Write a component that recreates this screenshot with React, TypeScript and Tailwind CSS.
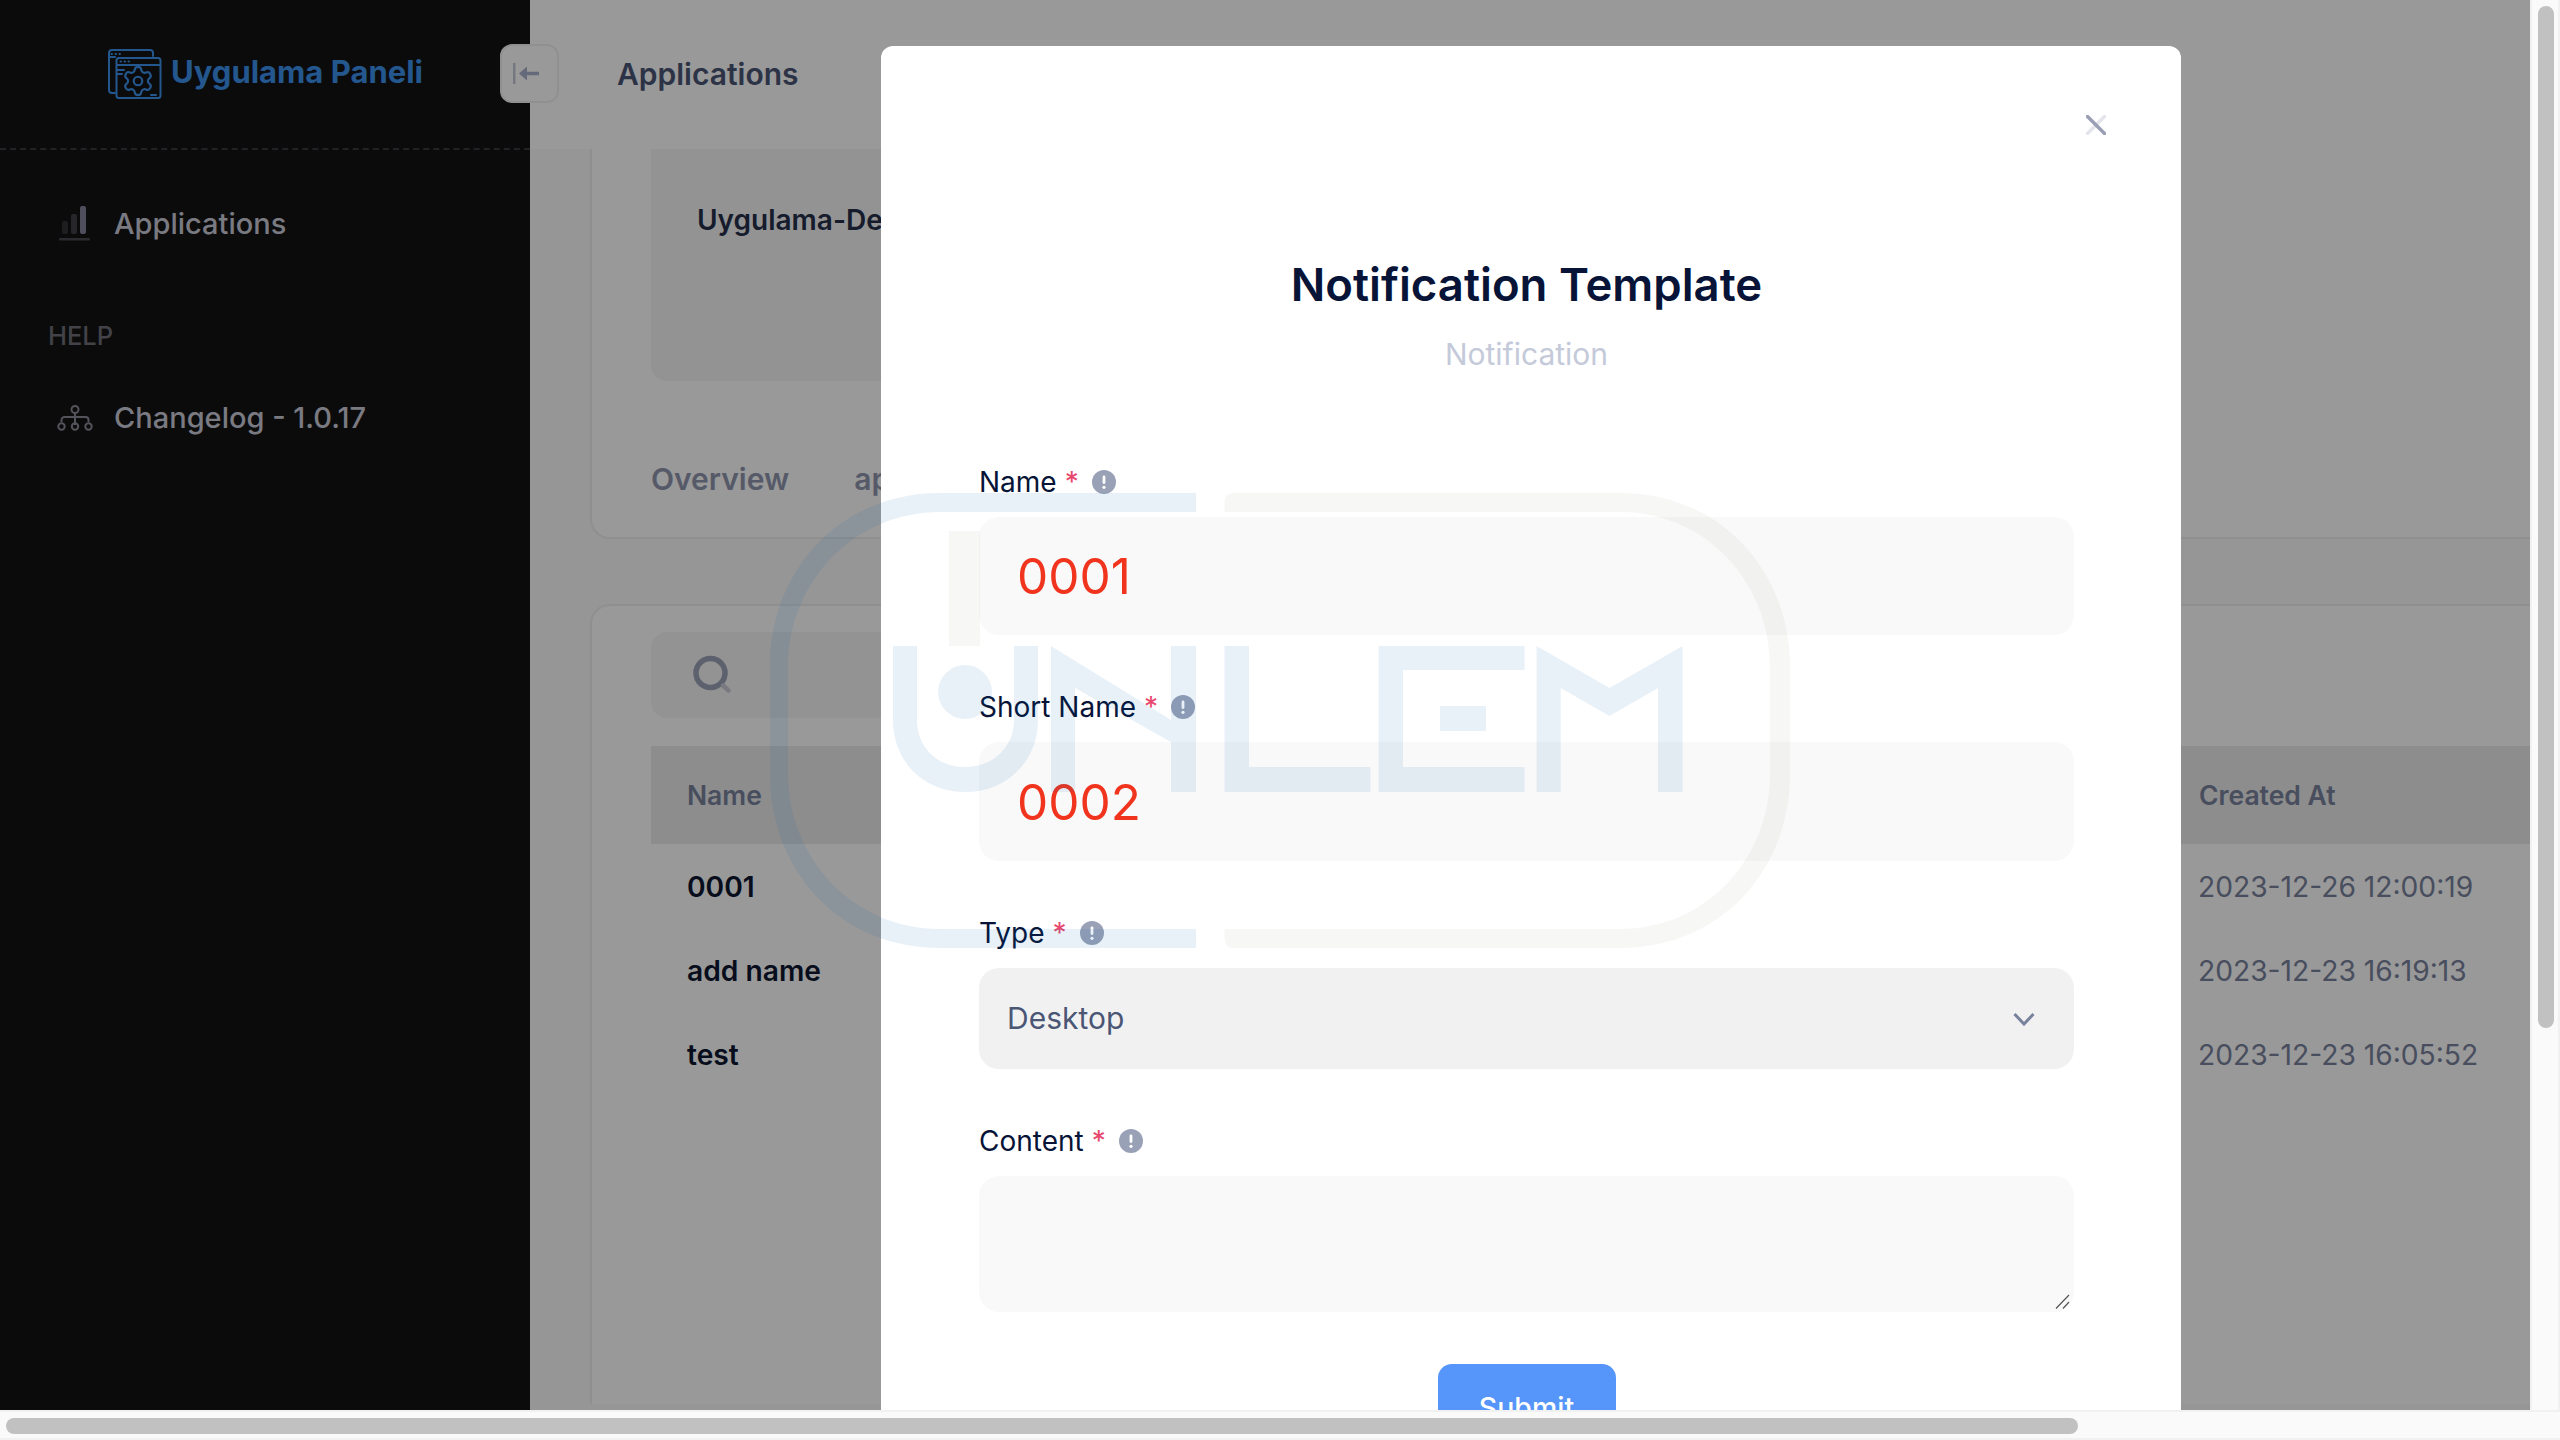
import React from "react";
import { Settings } from "lucide-react";

function Info() {
  return (
    <svg width="24" height="24" viewBox="0 0 24 24" className="shrink-0">
      <circle cx="12" cy="12" r="12" fill="#99a1b7" />
      <rect x="10.6" y="5.5" width="2.8" height="8.5" rx="1.4" fill="#fff" />
      <circle cx="12" cy="17.3" r="1.6" fill="#fff" />
    </svg>
  );
}

function Label({ text }: { text: string }) {
  return (
    <div className="flex items-center h-[36px] text-[28px] leading-[36px] text-[#071437]">
      <span>{text}</span>
      <span className="text-[#e8476e] ml-[8px]">*</span>
      <span className="ml-[13px]"><Info /></span>
    </div>
  );
}

function RedInput({ value, h }: { value: string; h: string }) {
  return (
    <input
      readOnly
      value={value}
      className={`w-full mt-[17px] ${h} rounded-[20px] bg-[#f9f9f9] pl-[38px] text-[49.5px] text-[#f1341e] outline-none`}
    />
  );
}

function Logo() {
  return (
    <svg width="54" height="50" viewBox="0 0 54 50" fill="none" stroke="#3c91eb" strokeWidth="2" strokeLinecap="round">
      <path d="M45 7V4a3 3 0 0 0-3-3H4a3 3 0 0 0-3 3v37a3 3 0 0 0 3 3h3" />
      <path d="M1 8h6" />
      <rect x="8.5" y="9" width="44" height="40" rx="2.5" />
      <path d="M9 16h43" />
      <path d="M3.5 5h.5M7.5 5h.5M11.5 5h.5M12.5 12.5h.5M16.5 12.5h.5M20.5 12.5h.5" />
      <path d="M9 21h7M9 25h5M43 46h5" />
      <svg x="13" y="15" width="34" height="34" viewBox="0 0 24 24" overflow="visible">
        <Settings size={24} strokeWidth={1.5} color="#3c91eb" />
      </svg>
    </svg>
  );
}

function ChartIcon() {
  return (
    <svg width="32" height="36" viewBox="0 0 32 36" className="shrink-0">
      <rect x="3" y="15" width="6" height="13" rx="2" fill="#323236" />
      <rect x="12" y="8" width="6" height="20" rx="2" fill="#3f3f46" />
      <rect x="21" y="0" width="6" height="28" rx="2" fill="#82829a" />
      <rect x="0" y="32" width="31" height="2.5" rx="1" fill="#48484f" />
    </svg>
  );
}

function TreeIcon() {
  return (
    <svg width="36" height="26" viewBox="0 0 36 26" fill="none" stroke="#8a8a98" strokeWidth="2" className="shrink-0">
      <circle cx="18" cy="4.5" r="3.5" />
      <path d="M18 8v12" />
      <path d="M4.5 17v-2a3 3 0 0 1 3-3h21a3 3 0 0 1 3 3v2" />
      <circle cx="4.5" cy="21.5" r="3.2" />
      <circle cx="18" cy="21.5" r="3.2" />
      <circle cx="31.5" cy="21.5" r="3.2" />
    </svg>
  );
}

function Watermark() {
  const blue = "rgba(0,100,178,0.09)";
  const gray = "rgba(60,60,40,0.045)";
  return (
    <svg
      width="1100"
      height="520"
      viewBox="740 460 1100 520"
      className="absolute left-[740px] top-[460px] pointer-events-none"
    >
      <path
        d="M1196 493H940C840 493 770 570 770 667V774C770 871 840 948 940 948H1196V929H940C855 929 788 860 788 774V667C788 581 855 512 940 512H1196Z"
        fill={blue}
      />
      <path
        d="M1224.5 512V503Q1224.5 493 1234 493H1620C1720 493 1790 570 1790 667V774C1790 871 1720 948 1620 948H1234Q1224.5 948 1224.5 938V929H1620C1705 929 1770 860 1770 774V667C1770 581 1705 512 1620 512Z"
        fill={gray}
      />
      <rect x="949" y="531" width="31" height="115" fill={gray} />
      <path
        d="M893 646H917V720C917 748 938 767 965 767C992 767 1014 748 1014 720V646H1038V720C1038 762 1006 792 965 792C924 792 893 762 893 720Z"
        fill={blue}
      />
      <ellipse cx="965" cy="692" rx="27" ry="27" fill={blue} />
      <path d="M1051 646L1171 720V646H1196V792H1171V742L1075 688V792H1051Z" fill={blue} />
      <path d="M1224.5 646H1249V767H1370.5V792H1224.5Z" fill={blue} />
      <path d="M1378.6 646H1524.5V670H1403V767H1524.5V792H1378.6Z" fill={blue} />
      <rect x="1440" y="706" width="46" height="25" fill={blue} />
      <path d="M1536.6 646L1609.5 688L1682.6 646V792H1658V688L1609.5 716L1560.7 688V792H1536.6Z" fill={blue} />
    </svg>
  );
}

function Row({ name, date, h }: { name: string; date: string; h: string }) {
  return (
    <div className={`flex items-center justify-between ${h} pl-[36px] text-[28.2px] leading-[36px]`}>
      <span className="font-semibold text-[#0d1730]">{name}</span>
      <span className="w-[332px] text-[#78829d]">{date}</span>
    </div>
  );
}

export default function App() {
  return (
    <div className="w-[2560px] h-[1440px] overflow-hidden flex flex-col bg-[#fafafa] font-['Inter',sans-serif]">
      <div className="flex h-[1410px]">
        <div className="relative w-[2530px] h-[1410px] overflow-hidden flex bg-[#fafafa]">
          {/* sidebar */}
          <aside className="w-[530px] shrink-0 bg-[#131314] flex flex-col">
            <div className="h-[150px] border-b-2 border-dashed border-[#3a3a40] flex pt-[49px] pl-[108px]">
              <Logo />
              <span className="ml-[9px] text-[31px] leading-[46px] font-bold text-[#3c91eb]">Uygulama Paneli</span>
            </div>
            <div className="flex items-center h-[36px] mt-[56px] ml-[59px] gap-[23px] text-[29px] font-medium text-[#cbcbd9]">
              <ChartIcon />
              <span>Applications</span>
            </div>
            <div className="mt-[78px] ml-[48px] text-[25.5px] leading-[32px] font-medium text-[#6e6e78]">HELP</div>
            <div className="flex items-center h-[36px] mt-[48px] ml-[57px] gap-[21px] text-[29px] font-medium text-[#cbcbd9]">
              <TreeIcon />
              <span>Changelog - 1.0.17</span>
            </div>
          </aside>

          {/* page */}
          <main className="flex-1 min-w-0 flex flex-col">
            <header className="h-[149px] shrink-0 flex items-center pl-[87px] bg-white">
              <span className="text-[30px] font-semibold text-[#4b5675]">Applications</span>
            </header>
            <div className="pl-[60px] flex flex-col gap-[65px]">
              <section className="h-[390px] rounded-bl-[20px] bg-white border-l-2 border-b-2 border-[#eeeeee] pl-[59px]">
                <div className="w-[1400px] h-[232px] rounded-b-[16px] bg-[#f5f5f5] pl-[46px] pt-[53px] text-[28px] leading-[36px] font-semibold text-[#252f4a]">
                  Uygulama-Dev
                </div>
                <div className="flex gap-[65px] mt-[80px] text-[30px] leading-[36px] font-semibold text-[#8f96ad]">
                  <span>Overview</span>
                  <span>api</span>
                </div>
              </section>
              <section className="rounded-tl-[20px] bg-white border-l-2 border-t-2 border-[#eeeeee] pl-[59px] pt-[26px] h-[800px]">
                <div className="w-[1400px] h-[86px] rounded-[16px] bg-[#f5f5f5] flex items-center pl-[41px]">
                  <svg width="40" height="40" viewBox="0 0 40 40" fill="none" className="mt-[-1px]">
                    <circle cx="18.5" cy="18" r="14.5" stroke="#9ca2b8" strokeWidth="5.5" />
                    <path d="M31 30.5l5.5 5" stroke="#c8cbd4" strokeWidth="4.5" strokeLinecap="round" />
                  </svg>
                </div>
                <div className="mt-[28px] h-[98px] bg-[#ebebeb] flex items-center justify-between pl-[36px] pt-[1px] text-[26.5px] font-semibold text-[#78829d]">
                  <span>Name</span>
                  <span className="w-[331px]">Created At</span>
                </div>
                <div className="pt-[1px]">
                  <Row name="0001" date="2023-12-26 12:00:19" h="h-[84px]" />
                  <Row name="add name" date="2023-12-23 16:19:13" h="h-[84px]" />
                  <Row name="test" date="2023-12-23 16:05:52" h="h-[84px]" />
                </div>
              </section>
            </div>
          </main>

          {/* collapse toggle */}
          <button className="absolute left-[500px] top-[44px] w-[59px] h-[59px] rounded-[12px] bg-white border-2 border-[#f1f1f4] flex items-center pl-[11px]">
            <svg width="28" height="22" viewBox="0 0 28 22" fill="none">
              <rect x="0" y="0" width="2.5" height="21" fill="#c4c9d8" />
              <path d="M6 10.5L14 3.5V8.7H26V12.3H14V17.5Z" fill="#a9b1cb" />
            </svg>
          </button>

          {/* backdrop */}
          <div className="absolute inset-0 bg-black/40" />

          {/* modal */}
          <div className="absolute left-[881px] top-[46px] w-[1300px] h-[1500px] rounded-[12px] bg-white pt-[69px] pl-[98px] pr-[107px]">
            <div className="flex justify-end mr-[-32px]">
              <svg width="20" height="20" viewBox="0 0 20 20" fill="none" strokeLinecap="round" strokeWidth="3.5">
                <path d="M1.5 18.5L18.5 1.5" stroke="#e4e5ec" />
                <path d="M1.5 1.5L18.5 18.5" stroke="#9a9fb5" />
              </svg>
            </div>
            <h1 className="mt-[120px] text-center text-[45.5px] leading-[60px] font-semibold text-[#071437]">Notification Template</h1>
            <p className="mt-[19px] text-center text-[30px] leading-[40px] text-[#c4cada]">Notification</p>
            <div className="mt-[90px]">
              <Label text="Name" />
              <RedInput value="0001" h="h-[118px]" />
            </div>
            <div className="mt-[54px]">
              <Label text="Short Name" />
              <RedInput value="0002" h="h-[119px]" />
            </div>
            <div className="mt-[54px]">
              <Label text="Type" />
              <div className="mt-[17px] h-[101px] rounded-[20px] bg-[#f1f1f2] flex items-center justify-between pl-[28px] pr-[39px] text-[30px] text-[#4b5675]">
                <span>Desktop</span>
                <svg width="22" height="14" viewBox="0 0 22 14" fill="none">
                  <path d="M1.5 2L11 12L20.5 2" stroke="#78829d" strokeWidth="3" />
                </svg>
              </div>
            </div>
            <div className="mt-[54px]">
              <Label text="Content" />
              <div className="relative mt-[17px]">
                <textarea readOnly className="block w-full h-[136px] resize-none rounded-[20px] bg-[#f9f9f9] outline-none" />
                <svg width="16" height="16" viewBox="0 0 16 16" className="absolute right-[3px] bottom-[2px]" fill="none" stroke="#555" strokeWidth="1.2">
                  <path d="M1 14.5L14 1M8 14.5L14 8" />
                </svg>
              </div>
            </div>
            <div className="flex justify-center mt-[52px]">
              <button className="w-[178px] h-[88px] rounded-[14px] bg-[#5695f9] text-white text-[28.5px] font-medium">Submit</button>
            </div>
          </div>

          <Watermark />
        </div>
        {/* vertical scrollbar */}
        <div className="w-[30px] h-[1410px] border-l-2 border-r-2 border-[#f1f1f1] bg-[#fafafa] pl-[6px] pt-[6px]">
          <div className="w-[16px] h-[1022px] rounded-full bg-[#c1c1c1]" />
        </div>
      </div>
      {/* horizontal scrollbar */}
      <div className="h-[30px] border-t-2 border-b-2 border-[#f1f1f1] bg-[#fafafa] pt-[6px] pl-[6px]">
        <div className="w-[2072px] h-[16px] rounded-full bg-[#c1c1c1]" />
      </div>
    </div>
  );
}
